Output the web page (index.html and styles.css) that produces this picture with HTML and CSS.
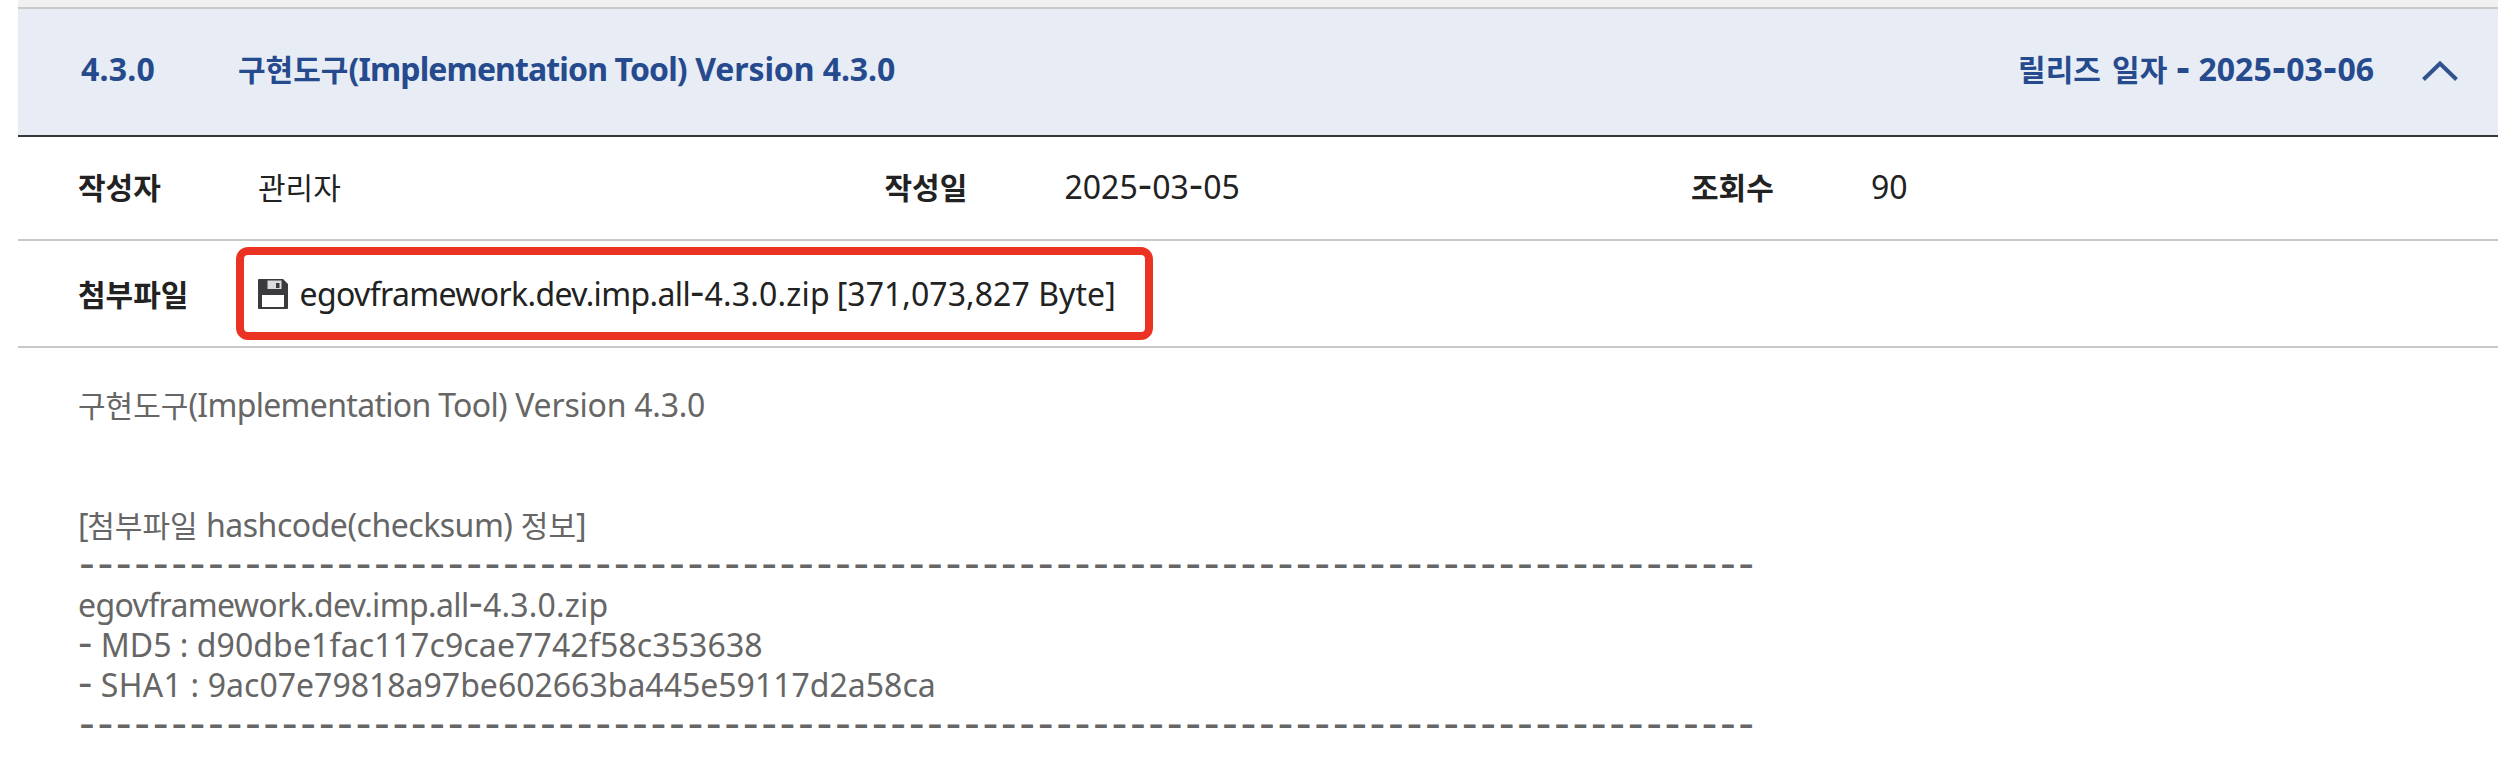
FILE: index.html
```html
<!DOCTYPE html>
<html lang="ko">
<head>
<meta charset="utf-8">
<title>구현도구 Version 4.3.0</title>
<link rel="stylesheet" href="styles.css">
</head>
<body>
<main class="release">
  <header class="release-head">
    <span class="version">4.3.0</span>
    <h1 class="title"><span class="ko">구현도구</span><span class="tool">(Implementation Tool)</span> <span class="num">Version 4.3.0</span></h1>
    <span class="date"><span class="ko">릴리즈 일자</span> <span class="hy">-</span> 2025<span class="hy">-</span>03<span class="hy">-</span>06</span>
    <svg class="chevron" viewBox="0 0 36 20"><path d="M1.5 18.5 18 2.5 34.500 18.5"/></svg>
  </header>
  <dl class="row meta">
    <div class="field"><dt><span class="ko">작성자</span></dt><dd><span class="ko">관리자</span></dd></div>
    <div class="field"><dt><span class="ko">작성일</span></dt><dd>2025<span class="hy">-</span>03<span class="hy">-</span>05</dd></div>
    <div class="field"><dt><span class="ko">조회수</span></dt><dd>90</dd></div>
  </dl>
  <dl class="row files">
    <dt><span class="ko">첨부파일</span></dt>
    <dd class="file">
      <svg class="disk" viewBox="0 0 30 31"><path class="disk-body" d="M1 0h24l5 5v24a1 1 0 0 1-1 1H1a1 1 0 0 1-1-1V1a1 1 0 0 1 1-1z"/><path class="disk-plate" d="M9.500 1.500h14V10h-14z"/><path class="disk-body" d="M18 4h3.500v5H18z"/><path class="disk-label" d="M4 16h22v12H4z"/></svg>
      <span class="name"><span class="file-base">egovframework.dev.imp.all</span><span class="hy">-</span><span class="file-ver">4.3.0.zip</span> <span class="size">[371,073,827 Byte]</span></span>
    </dd>
  </dl>
  <section class="body">
    <p><span class="ko">구현도구</span><span class="tool">(Implementation Tool)</span> <span class="num">Version 4.3.0</span></p>
    <p class="gap"><span class="open">[</span><span class="ko">첨부파일</span> <span class="hash-title">hashcode(checksum)</span> <span class="ko">정보</span>]</p>
    <p class="rule">-------------------------------------------------------------------------------------------</p>
    <p><span class="file-base">egovframework.dev.imp.all</span><span class="hy">-</span><span class="file-ver">4.3.0.zip</span></p>
    <p><span class="hy">-</span> MD5 : <span class="md5">d90dbe1fac117c9cae7742f58c353638</span></p>
    <p><span class="hy">-</span> <span class="sha-label">SHA1 :</span> 9ac07e79818a97be602663ba445e59117d2a58ca</p>
    <p class="rule">-------------------------------------------------------------------------------------------</p>
  </section>
</main>
</body>
</html>
```
FILE: styles.css
```css
* { box-sizing: border-box; margin: 0; padding: 0; }
body {
  background: #fff;
  color: #222;
  font-family: "Noto Sans", "Noto Sans CJK KR", sans-serif;
  font-size: 32px;
  line-height: 40px;
}
.ko { font-family: "Noto Sans CJK KR", sans-serif; font-size: 30px; line-height: 0; }
.hy { font-family: "DejaVu Sans", sans-serif; font-size: 40px; line-height: 0; }
.release {
  width: 2480px;
  height: 776px;
  margin-left: 18px;
  padding-top: 7px;
  background: linear-gradient(#f0f0f0 7px, #fff 7px);
  white-space: nowrap;
}
.release-head {
  display: flex;
  height: 130px;
  padding: 40px 40px 0 63px;
  border-top: 2px solid #c8cac9;
  border-bottom: 2px solid #37373a;
  background: #e8edf5;
  color: #264a8e;
  font-weight: 700;
}
.release-head .hy { font-size: 35px; }
.version { width: 157px; letter-spacing: 0.2px; }
.version, .title { flex: none; }
.title { font-size: inherit; }
.title .tool { letter-spacing: -0.87px; }
.title .num { letter-spacing: -0.1px; }
.date { margin-left: auto; }
.date .ko { word-spacing: 2.8px; }
.chevron { width: 36px; height: 20px; margin: 12px 0 0 48px; fill: none; stroke: #31528f; stroke-width: 4; }
.row { display: flex; border-bottom: 2px solid #c8c8c8; }
.meta { height: 104px; padding: 30px 0 0 60px; }
.field { display: flex; width: 806.5px; }
dt { width: 180px; font-weight: 700; }
.files { height: 107px; padding: 6px 0 0 60px; }
.files dt { width: 157.5px; padding-top: 27px; }
.file {
  display: flex;
  width: 917px;
  height: 93px;
  padding: 19px 0 0 14px;
  border: 8px solid #eb3323;
  border-radius: 12px;
}
.disk { width: 30px; height: 31px; margin: 5px 12px 0 0; }
.disk-body { fill: #3b3b3d; }
.disk-plate { fill: #dcdcde; }
.disk-label { fill: #fff; }
.file-base { letter-spacing: -0.64px; }
.file-ver { letter-spacing: 0.2px; }
.size { margin-left: -1.5px; letter-spacing: 0.06px; }
.body { padding: 37px 0 0 60px; color: #666; }
.body p { height: 40px; }
.body .tool { letter-spacing: -0.69px; }
.body .num { letter-spacing: -0.23px; }
.body .gap { margin-top: 80px; }
.open { letter-spacing: -1.3px; }
.hash-title { letter-spacing: -0.48px; }
.md5 { letter-spacing: 0.12px; }
.sha-label { letter-spacing: 0.3px; }
.rule {
  padding-left: 1px;
  font-family: "DejaVu Sans", sans-serif;
  font-size: 44px;
  line-height: 36px;
  letter-spacing: 2.56px;
}
```
